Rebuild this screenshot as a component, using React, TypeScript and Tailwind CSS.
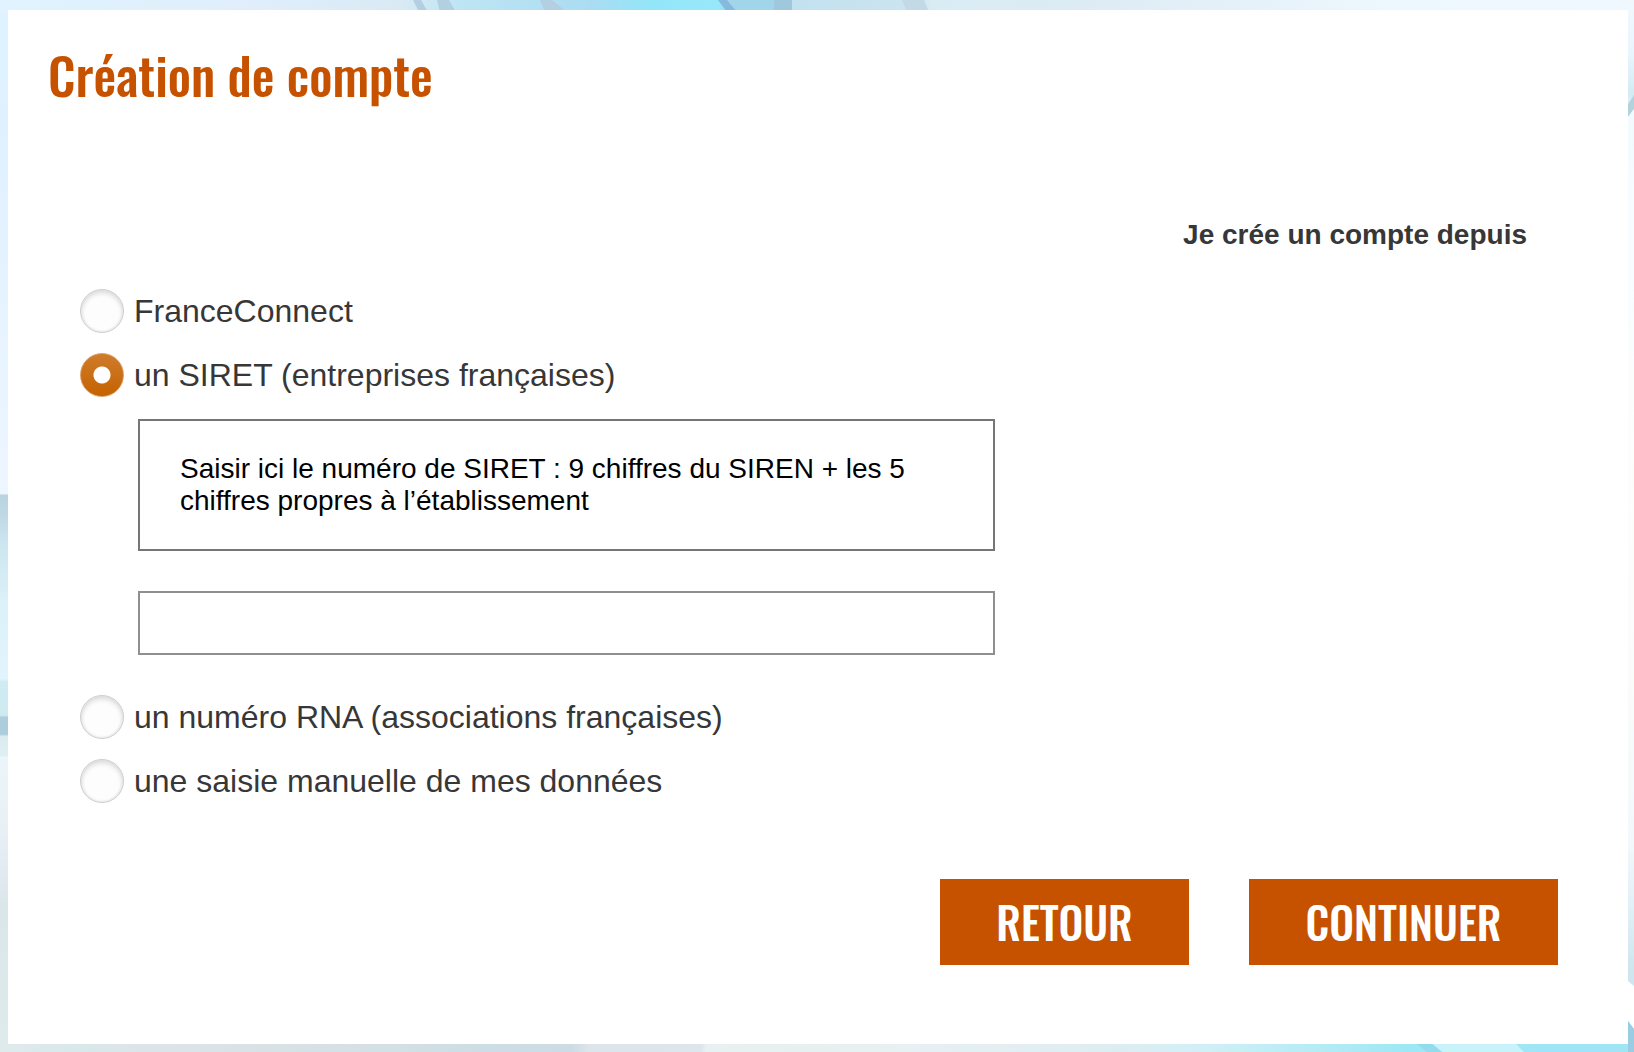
import React, { useState } from 'react';

type Source = 'franceconnect' | 'siret' | 'rna' | 'manuel';

interface SourceOptionProps {
    id: Source;
    label: string;
    selected: Source;
    onSelect: (id: Source) => void;
}

const SourceOption: React.FC<SourceOptionProps> = ({ id, label, selected, onSelect }) => (
    <div className="flex min-h-16 items-center gap-[10px]">
        <input
            type="radio"
            id={id}
            name="source"
            value={id}
            checked={selected === id}
            onChange={() => onSelect(id)}
            className="size-11 shrink-0 cursor-pointer appearance-none rounded-full border border-[#cecece] bg-[#fdfdfd] shadow-[inset_0_3px_5px_#dcdcdc,inset_0_0_3px_#d8d8d8] checked:border-[#dfa068] checked:bg-[radial-gradient(circle,#ffffff_8px,transparent_9px),linear-gradient(#cf7c2c,#c46200)] checked:shadow-none"
        />
        <label htmlFor={id} className="cursor-pointer text-[32px] leading-9">{label}</label>
    </div>
);

// Light blue rays, only visible around the edges of the card
const Backdrop: React.FC = () => (
    <svg className="absolute inset-0 -z-10 size-full" viewBox="0 0 1634 1052" preserveAspectRatio="none" aria-hidden="true">
        <defs>
            <linearGradient id="top" gradientUnits="userSpaceOnUse" x1="0" y1="0" x2="1634" y2="0">
                <stop offset="0" stopColor="#e0f3fe" />
                <stop offset=".16" stopColor="#dfeefa" />
                <stop offset=".245" stopColor="#d9eaf5" />
                <stop offset=".28" stopColor="#bfe5f4" />
                <stop offset=".36" stopColor="#abdcf1" />
                <stop offset=".4" stopColor="#93e6f9" />
                <stop offset=".44" stopColor="#97e8fa" />
                <stop offset=".445" stopColor="#a1d5ea" />
                <stop offset=".48" stopColor="#a1d5ea" />
                <stop offset=".484" stopColor="#c3e1ef" />
                <stop offset=".56" stopColor="#cbe4f0" />
                <stop offset=".57" stopColor="#d9ecf4" />
                <stop offset=".66" stopColor="#dcebf4" />
                <stop offset=".85" stopColor="#edf7fe" />
                <stop offset="1" stopColor="#f0f8fe" />
            </linearGradient>
            <linearGradient id="left" gradientUnits="userSpaceOnUse" x1="0" y1="0" x2="0" y2="1052">
                <stop offset="0" stopColor="#def3ff" />
                <stop offset=".15" stopColor="#e0f1ff" />
                <stop offset=".469" stopColor="#eef6ff" />
                <stop offset=".471" stopColor="#b9d4e1" />
                <stop offset=".49" stopColor="#bfd8e4" />
                <stop offset=".515" stopColor="#cbe6ef" />
                <stop offset=".57" stopColor="#dbf0f7" />
                <stop offset=".645" stopColor="#e3f5fc" />
                <stop offset=".648" stopColor="#cfecf3" />
                <stop offset=".68" stopColor="#cfe9f1" />
                <stop offset=".682" stopColor="#accddb" />
                <stop offset=".698" stopColor="#accddb" />
                <stop offset=".7" stopColor="#d9ecf1" />
                <stop offset=".718" stopColor="#dfeef3" />
                <stop offset=".72" stopColor="#ecf5fa" />
                <stop offset=".79" stopColor="#e8f0f6" />
                <stop offset=".86" stopColor="#dbe6eb" />
                <stop offset="1" stopColor="#dfeaec" />
            </linearGradient>
            <linearGradient id="right" gradientUnits="userSpaceOnUse" x1="0" y1="0" x2="0" y2="1052">
                <stop offset="0" stopColor="#f0f8fe" />
                <stop offset=".05" stopColor="#e9f5fd" />
                <stop offset=".09" stopColor="#d3ebf2" />
                <stop offset=".11" stopColor="#f2fafe" />
                <stop offset=".23" stopColor="#f8fcff" />
                <stop offset=".48" stopColor="#fdfdfb" />
                <stop offset=".67" stopColor="#f9fbfa" />
                <stop offset=".8" stopColor="#f3f8fb" />
                <stop offset=".86" stopColor="#e2f0f7" />
                <stop offset=".92" stopColor="#cfe6ee" />
                <stop offset="1" stopColor="#c5e6f0" />
            </linearGradient>
            <linearGradient id="bottom" gradientUnits="userSpaceOnUse" x1="0" y1="0" x2="1634" y2="0">
                <stop offset="0" stopColor="#dfeaec" />
                <stop offset=".05" stopColor="#d9e8ea" />
                <stop offset=".1" stopColor="#dce4e7" />
                <stop offset=".24" stopColor="#d3e0e4" />
                <stop offset=".3" stopColor="#cddde5" />
                <stop offset=".35" stopColor="#cedbe4" />
                <stop offset=".36" stopColor="#dbe5ea" />
                <stop offset=".429" stopColor="#dce6eb" />
                <stop offset=".432" stopColor="#e8f0f1" />
                <stop offset=".56" stopColor="#e7f0f2" />
                <stop offset=".67" stopColor="#dfedf1" />
                <stop offset=".735" stopColor="#d2eff6" />
                <stop offset=".8" stopColor="#b7ecf6" />
                <stop offset=".86" stopColor="#9ee8f5" />
                <stop offset="1" stopColor="#9fe5f5" />
            </linearGradient>
        </defs>
        <rect width="1634" height="1052" fill="#eef6fb" />
        <rect width="817" height="1052" fill="url(#left)" />
        <rect x="817" width="817" height="1052" fill="url(#right)" />
        <rect width="1634" height="12" fill="url(#top)" />
        <rect y="1042" width="1634" height="10" fill="url(#bottom)" />
        <path d="M413 0h8l7 12h-9zM437 0h12l7 12h-16zM540 0h12l15 12h-22z" fill="#b2d0e2" />
        <path d="M718 0h9l10 12h-10z" fill="#84bade" />
        <path d="M774 0h18v12h-18z" fill="#9fc8dd" />
        <path d="M902 0h22l5 12h-22z" fill="#c3d9e6" />
        <path d="M1628 104l6-9v14l-6 8z" fill="#b4d2dc" />
        <path d="M1628 117l6-8v40h-6z" fill="#f2fafe" />
        <path d="M1628 981l6 5v43l-6-8z" fill="#fff" />
        <path d="M1628 1021l6 8v23h-6z" fill="#9acde3" />
        <path d="M1430 1042h84l10 10h-82z" fill="#c9f3fb" />
        <path d="M1414 1042h16l12 10h-15z" fill="#92dcee" />
    </svg>
);

const App: React.FC = () => {
    const [source, setSource] = useState<Source>('siret');
    const [siret, setSiret] = useState('');

    return (
        <div className="relative isolate flex min-h-screen flex-col pt-[10px] pr-[6px] pb-2 pl-2 font-['Liberation_Sans',Arial,sans-serif] text-[#373737]">
            <Backdrop />
            <main className="flex-1 bg-white pt-[26px] pr-[70px] pb-[79px] pl-[72px]">
                <h1 className="-ml-8 font-['Oswald','Liberation_Sans_Narrow',sans-serif] text-[51px] leading-[76px] font-medium text-[#c65200]">
                    Création de compte
                </h1>

                <form onSubmit={(e) => e.preventDefault()} className="mt-[107px]">
                    <fieldset>
                        <legend className="mb-7 ml-auto pr-[31px] text-[28px] leading-8 font-bold">
                            Je crée un compte depuis
                        </legend>

                        <SourceOption id="franceconnect" label="FranceConnect" selected={source} onSelect={setSource} />
                        <SourceOption id="siret" label="un SIRET (entreprises françaises)" selected={source} onSelect={setSource} />

                        {source === 'siret' && (
                            <div className="mt-3 mb-[30px] ml-[58px] flex max-w-[857px] flex-col gap-10">
                                <label htmlFor="siret-number" className="border-2 border-[#767676] px-10 py-8 text-[28px] leading-8 text-black">
                                    Saisir ici le numéro de SIRET : 9 chiffres du SIREN + les 5 chiffres propres à l’établissement
                                </label>
                                <input
                                    type="text"
                                    id="siret-number"
                                    value={siret}
                                    onChange={(e) => setSiret(e.target.value)}
                                    className="h-16 w-full border-2 border-[#8f8f8f] px-4 text-[28px] text-black"
                                />
                            </div>
                        )}

                        <SourceOption id="rna" label="un numéro RNA (associations françaises)" selected={source} onSelect={setSource} />
                        <SourceOption id="manuel" label="une saisie manuelle de mes données" selected={source} onSelect={setSource} />
                    </fieldset>

                    <div className="mt-[66px] flex flex-wrap justify-end gap-[60px] font-['Oswald','Liberation_Sans_Narrow',sans-serif] text-[44px] leading-[86px] font-medium text-white">
                        <button type="button" className="w-[249px] bg-[#c65200]">RETOUR</button>
                        <button type="submit" className="w-[309px] bg-[#c65200]">CONTINUER</button>
                    </div>
                </form>
            </main>
        </div>
    );
};

export default App;
